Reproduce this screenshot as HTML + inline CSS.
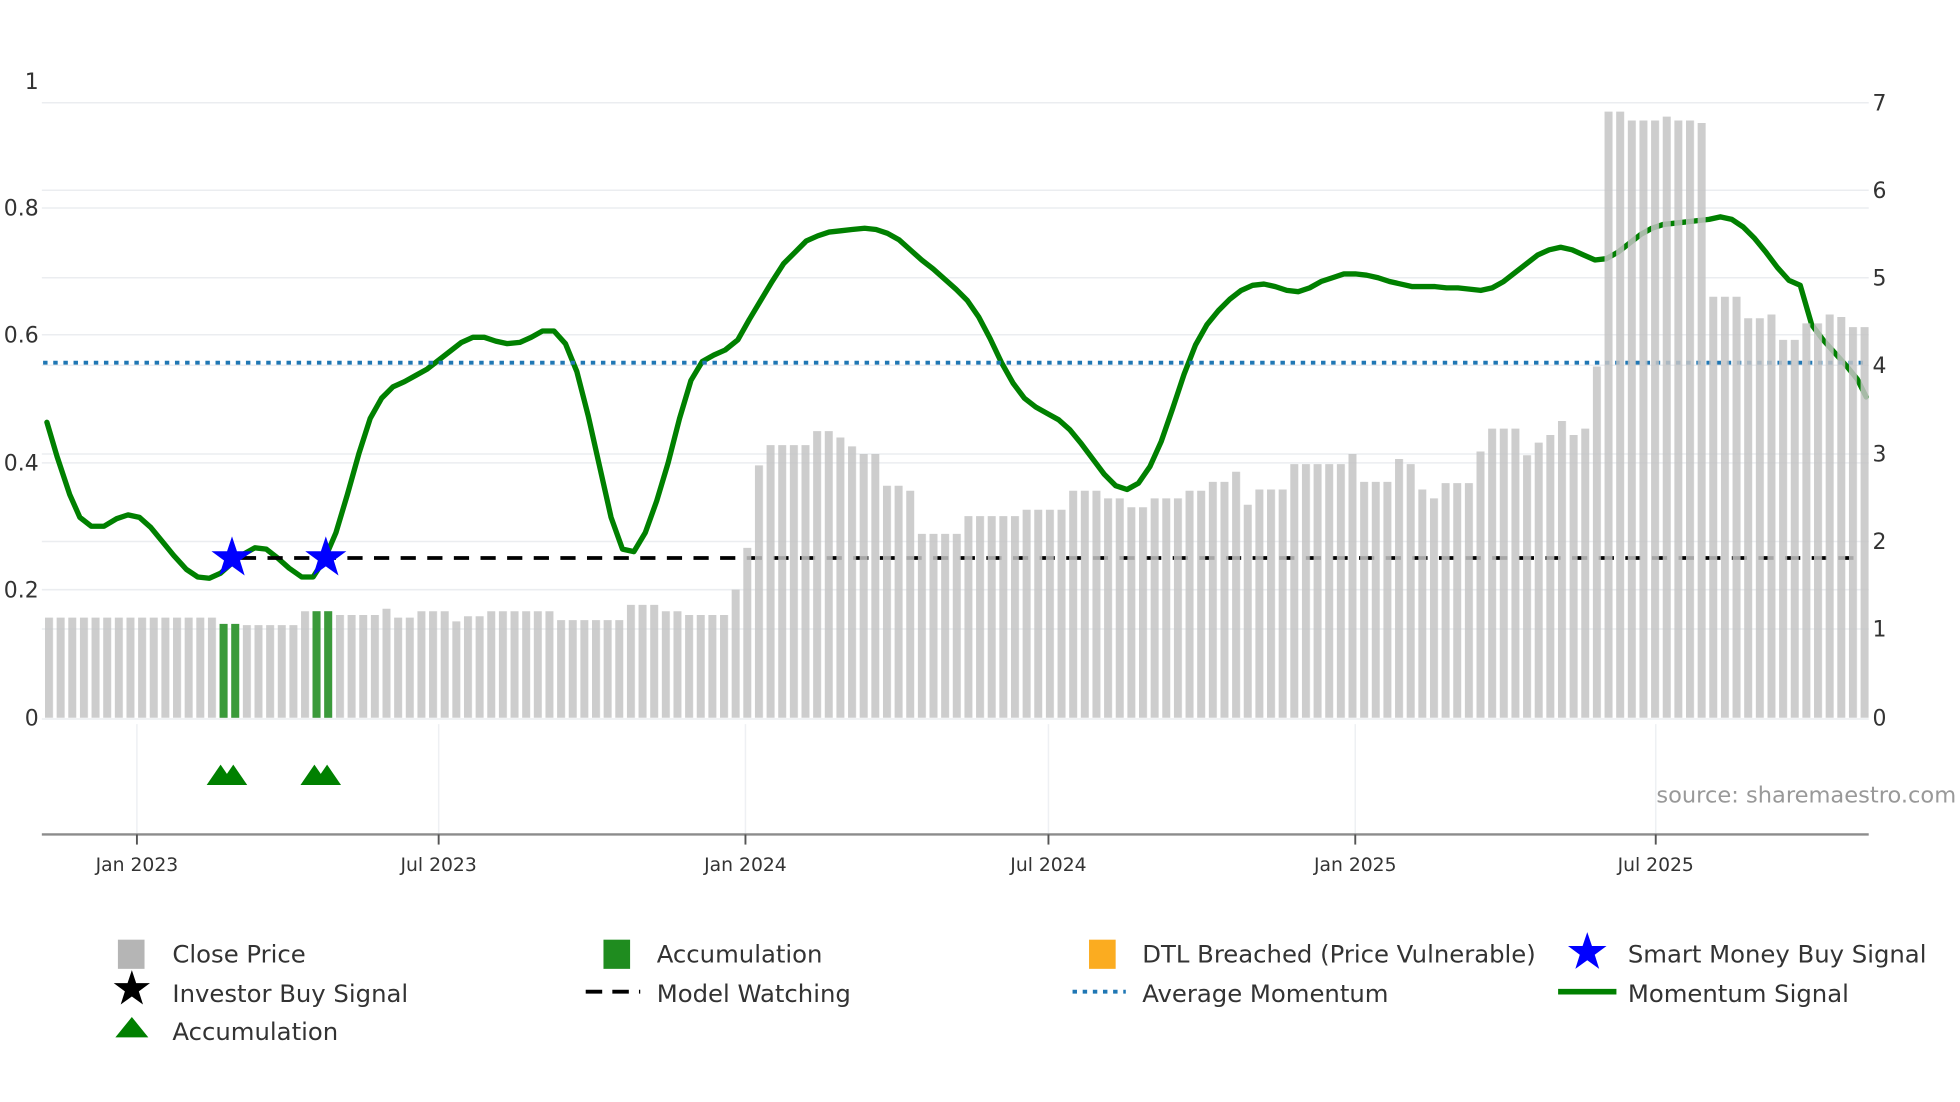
<!DOCTYPE html>
<html><head><meta charset="utf-8"><style>
html,body{margin:0;padding:0;background:#fff;width:1960px;height:1102px;overflow:hidden}
svg{display:block}
text{font-family:"DejaVu Sans","Liberation Sans",sans-serif}
</style></head><body>
<svg width="1960" height="1102" viewBox="0 0 1546 869" preserveAspectRatio="none" xmlns="http://www.w3.org/2000/svg">
<defs>
<pattern id="bars" patternUnits="userSpaceOnUse" x="35.5" y="0" width="9.18" height="900">
<rect x="0" y="0" width="6.3" height="900" fill="#c4c4c4"/>
</pattern>
</defs>
<rect x="0" y="0" width="1546" height="869" fill="#fff"/>
<!-- grid -->
<g stroke="#ebedf0" stroke-width="1.2">
<line x1="33" x2="1474" y1="81" y2="81"/>
<line x1="33" x2="1474" y1="150" y2="150"/>
<line x1="33" x2="1474" y1="219" y2="219"/>
<line x1="33" x2="1474" y1="288" y2="288"/>
<line x1="33" x2="1474" y1="358" y2="358"/>
<line x1="33" x2="1474" y1="427" y2="427"/>
<line x1="33" x2="1474" y1="496" y2="496"/>
<line x1="33" x2="1474" y1="164" y2="164"/>
<line x1="33" x2="1474" y1="264" y2="264"/>
<line x1="33" x2="1474" y1="365" y2="365"/>
<line x1="33" x2="1474" y1="465" y2="465"/>
<line x1="33" x2="1474" y1="567" y2="567"/>
</g>
<g stroke="#eef0f3" stroke-width="1.2">
<line x1="108" x2="108" y1="571" y2="658"/>
<line x1="346" x2="346" y1="571" y2="658"/>
<line x1="588" x2="588" y1="571" y2="658"/>
<line x1="827" x2="827" y1="571" y2="658"/>
<line x1="1069" x2="1069" y1="571" y2="658"/>
<line x1="1306" x2="1306" y1="571" y2="658"/>
</g>
<!-- momentum line -->
<polyline fill="none" stroke="#008000" stroke-width="4.2" stroke-linejoin="round" stroke-linecap="round" points="37,333 45,360 55,390 63,408 72,415 82,415 92,409 101,406 110,408 119,416 128,427 137,438 147,449 156,455 165,456 174,452 183,444 192,437 201,432 210,433 219,440 228,448 238,455 247,455 256,441 265,420 274,390 283,358 292,330 301,314 310,305 319,301 328,296 337,291 346,284 355,277 364,270 373,266 382,266 391,269 400,271 410,270 419,266 428,261 437,261 446,271 455,293 464,328 473,368 482,408 491,433 500,435 509,420 518,395 527,365 536,330 545,300 554,285 563,280 572,276 582,268 591,252 600,237 609,222 618,208 627,199 636,190 645,186 654,183 663,182 672,181 682,180 691,181 700,184 709,189 718,197 727,205 736,212 745,220 754,228 763,237 772,250 781,267 790,286 799,302 808,314 817,321 826,326 835,331 844,339 853,350 862,362 871,374 880,383 889,386 898,381 907,368 916,348 925,322 934,295 943,272 952,256 961,245 970,236 979,229 988,225 997,224 1006,226 1015,229 1024,230 1033,227 1042,222 1051,219 1060,216 1069,216 1078,217 1087,219 1096,222 1105,224 1114,226 1123,226 1132,226 1141,227 1150,227 1159,228 1168,229 1177,227 1186,222 1195,215 1204,208 1213,201 1222,197 1231,195 1240,197 1249,201 1258,205 1267,204 1276,199 1285,192 1294,185 1303,180 1312,177 1321,176 1330,175 1339,174 1348,173 1357,171 1366,173 1375,179 1384,188 1393,199 1402,211 1411,221 1420,225 1429,256 1438,268 1447,278 1456,288 1465,299 1472,313"/>
<!-- average momentum -->
<line x1="34" x2="1474" y1="286" y2="286" stroke="#1f77b4" stroke-width="3" stroke-dasharray="3.5 4.5"/>
<!-- model watching -->
<line x1="190" x2="1468" y1="440" y2="440" stroke="#000" stroke-width="3" stroke-dasharray="12 9"/>
<!-- bars -->
<path opacity="0.85" fill="url(#bars)" d="M34,566 V487 H171.8 V492 H190.2 V493 H236.1 V482 H263.6 V485 H300.3 V480 H309.5 V487 H327.9 V482 H355.4 V490 H364.6 V486 H383 V482 H438 V489 H493.1 V477 H520.6 V482 H539 V485 H575.7 V465 H584.9 V432 H594 V367 H603.3 V351 H640 V340 H658.3 V345 H667.5 V352 H676.7 V358 H695 V383 H713.4 V387 H722.6 V421 H759.3 V407 H805.2 V402 H842 V387 H869.5 V393 H887.8 V400 H906.2 V393 H933.7 V387 H952 V380 H970.5 V372 H979.6 V398 H988.8 V386 H1016.4 V366 H1062.3 V358 H1071.4 V380 H1099 V362 H1108.2 V366 H1117.3 V386 H1126.5 V393 H1135.7 V381 H1163.2 V356 H1172.4 V338 H1200 V359 H1209.1 V349 H1218.3 V343 H1227.5 V332 H1236.7 V343 H1245.9 V338 H1255 V289 H1264.2 V88 H1282.6 V95 H1310.1 V92 H1319.3 V95 H1337.7 V97 H1346.8 V234 H1374.4 V251 H1392.7 V248 H1401.9 V268 H1420.3 V255 H1438.6 V248 H1447.8 V250 H1457 V258 H1476 V566 Z"/>
<g fill="#3a9a3a">
<rect x="173.2" y="492" width="6.3" height="74"/>
<rect x="182.4" y="492" width="6.3" height="74"/>
<rect x="246.5" y="482" width="6.3" height="84"/>
<rect x="255.7" y="482" width="6.3" height="84"/>
</g>
<!-- stars -->
<g fill="#0000ff">
<polygon transform="translate(183,440)" points="0,-17 3.9,-5.3 16.2,-5.3 6.3,2 10,13.8 0,6.6 -10,13.8 -6.3,2 -16.2,-5.3 -3.9,-5.3"/>
<polygon transform="translate(257,440)" points="0,-17 3.9,-5.3 16.2,-5.3 6.3,2 10,13.8 0,6.6 -10,13.8 -6.3,2 -16.2,-5.3 -3.9,-5.3"/>
</g>
<!-- triangles -->
<g fill="#008000">
<polygon points="163,619 174,603 185,619"/>
<polygon points="173,619 184,603 195,619"/>
<polygon points="237,619 248,603 259,619"/>
<polygon points="247,619 258,603 269,619"/>
</g>
<!-- x axis -->
<line x1="33" x2="1474" y1="658" y2="658" stroke="#8c8c8c" stroke-width="1.8"/>
<g stroke="#555" stroke-width="1.5">
<line x1="108" x2="108" y1="658" y2="666"/>
<line x1="346" x2="346" y1="658" y2="666"/>
<line x1="588" x2="588" y1="658" y2="666"/>
<line x1="827" x2="827" y1="658" y2="666"/>
<line x1="1069" x2="1069" y1="658" y2="666"/>
<line x1="1306" x2="1306" y1="658" y2="666"/>
</g>
<g font-size="14.8" fill="#333" text-anchor="middle">
<text x="108" y="687">Jan 2023</text>
<text x="346" y="687">Jul 2023</text>
<text x="588" y="687">Jan 2024</text>
<text x="827" y="687">Jul 2024</text>
<text x="1069" y="687">Jan 2025</text>
<text x="1306" y="687">Jul 2025</text>
</g>
<!-- y labels -->
<g font-size="17.3" fill="#333" text-anchor="end">
<text x="30.5" y="70">1</text>
<text x="30.5" y="170">0.8</text>
<text x="30.5" y="270">0.6</text>
<text x="30.5" y="371">0.4</text>
<text x="30.5" y="471">0.2</text>
<text x="30.5" y="572">0</text>
</g>
<g font-size="17.3" fill="#333">
<text x="1477" y="87">7</text>
<text x="1477" y="156">6</text>
<text x="1477" y="225">5</text>
<text x="1477" y="294">4</text>
<text x="1477" y="364">3</text>
<text x="1477" y="433">2</text>
<text x="1477" y="502">1</text>
<text x="1477" y="572">0</text>
</g>
<text x="1543" y="633" font-size="17.8" fill="#999" text-anchor="end">source: sharemaestro.com</text>
<!-- legend -->
<g font-size="19.2" fill="#333">
<rect x="93" y="741" width="21" height="23" fill="#b5b5b5"/>
<text x="136" y="759">Close Price</text>
<polygon transform="translate(104,780)" points="0,-15 3.4,-4.7 14.3,-4.7 5.5,1.8 8.8,12.1 0,5.8 -8.8,12.1 -5.5,1.8 -14.3,-4.7 -3.4,-4.7" fill="#000"/>
<text x="136" y="790">Investor Buy Signal</text>
<polygon points="91,818 104,802 117,818" fill="#008000"/>
<text x="136" y="820">Accumulation</text>

<rect x="476" y="741" width="21" height="23" fill="#1f8c1f"/>
<text x="518" y="759">Accumulation</text>
<line x1="462" x2="505" y1="782" y2="782" stroke="#000" stroke-width="3" stroke-dasharray="13 8"/>
<text x="518" y="790">Model Watching</text>

<rect x="859" y="741" width="21" height="23" fill="#fbac20"/>
<text x="901" y="759">DTL Breached (Price Vulnerable)</text>
<line x1="846" x2="888" y1="782" y2="782" stroke="#1f77b4" stroke-width="3" stroke-dasharray="3.5 4.5"/>
<text x="901" y="790">Average Momentum</text>

<polygon transform="translate(1252,751)" points="0,-16 3.7,-5 15.2,-5 5.9,1.9 9.4,13 0,6.2 -9.4,13 -5.9,1.9 -15.2,-5 -3.7,-5" fill="#0000ff"/>
<text x="1284" y="759">Smart Money Buy Signal</text>
<line x1="1229" x2="1275" y1="782" y2="782" stroke="#008000" stroke-width="4.5"/>
<text x="1284" y="790">Momentum Signal</text>
</g>
</svg>
</body></html>
